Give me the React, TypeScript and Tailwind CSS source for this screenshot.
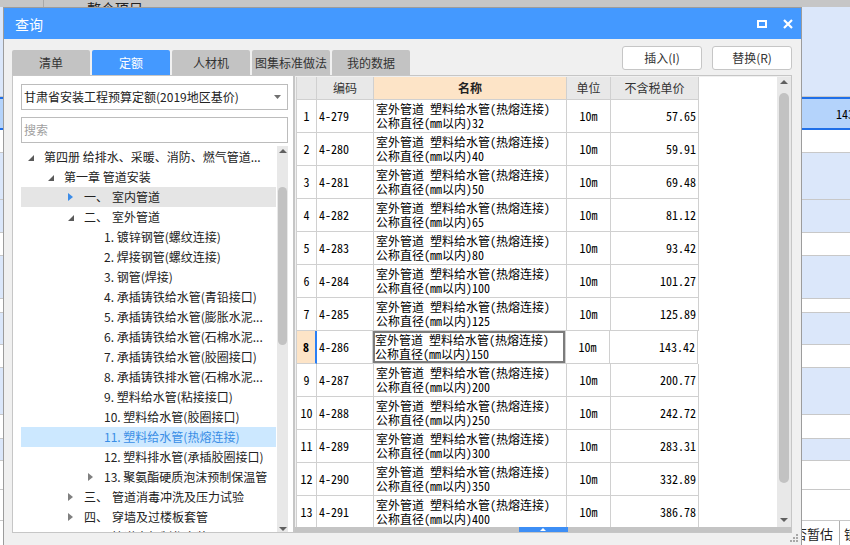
import React from "react";

const UI = "font-['Noto_Sans_CJK_SC','Noto_Sans',sans-serif]";
const MONO = "font-['Noto_Sans_Mono_CJK_SC','Noto_Sans_CJK_SC',monospace]";

const bgRows: { cls: string; text?: string }[] = [
  { cls: "h-[90px] bg-[#dbe7fa] border-b border-[#c8c8c8]" },
  { cls: "h-[33px] bg-[#b4d3fb] border-y-2 border-[#1f6fe8] flex items-center pl-[836px] whitespace-nowrap", text: "143.42" },
  { cls: "h-[23px] bg-white border-b border-[#c8c8c8]" },
  { cls: "h-[47px] bg-[#dbe7fa] border-b border-[#c8c8c8]" },
  { cls: "h-[33px] bg-[#dbe7fa] border-b border-[#c8c8c8]" },
  { cls: "h-[23px] bg-white border-b border-[#c8c8c8]" },
  { cls: "h-[43px] bg-[#dbe7fa] border-b border-[#c8c8c8]" },
  { cls: "h-[14px] bg-white border-b border-[#c8c8c8]" },
  { cls: "h-[32px] bg-[#dbe7fa] border-b border-[#c8c8c8]" },
  { cls: "h-[23px] bg-white border-b border-[#c8c8c8]" },
  { cls: "h-[47px] bg-[#dbe7fa] border-b border-[#c8c8c8]" },
  { cls: "h-[24px] bg-white border-b border-[#c8c8c8]" },
  { cls: "h-[22px] bg-[#dbe7fa] border-b border-[#c8c8c8]" },
  { cls: "h-[29px] bg-white border-b border-[#c8c8c8]" },
  { cls: "h-[31px] bg-white border-b border-[#c8c8c8]" },
];

type TNode = {
  l: 0 | 1 | 2 | 3;
  icon: "open" | "closed" | "none";
  t: string;
  pre?: string;
  sel?: "gray" | "blue";
};

const tree: TNode[] = [
  { l: 0, icon: "open", t: "第四册 给排水、采暖、消防、燃气管道..." },
  { l: 1, icon: "open", t: "第一章 管道安装" },
  { l: 2, icon: "closed", pre: "一、", t: "室内管道", sel: "gray" },
  { l: 2, icon: "open", pre: "二、", t: "室外管道" },
  { l: 3, icon: "none", t: "1. 镀锌钢管(螺纹连接)" },
  { l: 3, icon: "none", t: "2. 焊接钢管(螺纹连接)" },
  { l: 3, icon: "none", t: "3. 钢管(焊接)" },
  { l: 3, icon: "none", t: "4. 承插铸铁给水管(青铅接口)" },
  { l: 3, icon: "none", t: "5. 承插铸铁给水管(膨胀水泥..." },
  { l: 3, icon: "none", t: "6. 承插铸铁给水管(石棉水泥..." },
  { l: 3, icon: "none", t: "7. 承插铸铁给水管(胶圈接口)" },
  { l: 3, icon: "none", t: "8. 承插铸铁排水管(石棉水泥..." },
  { l: 3, icon: "none", t: "9. 塑料给水管(粘接接口)" },
  { l: 3, icon: "none", t: "10. 塑料给水管(胶圈接口)" },
  { l: 3, icon: "none", t: "11. 塑料给水管(热熔连接)", sel: "blue" },
  { l: 3, icon: "none", t: "12. 塑料排水管(承插胶圈接口)" },
  { l: 3, icon: "closed", t: "13. 聚氨酯硬质泡沫预制保温管" },
  { l: 2, icon: "closed", pre: "三、", t: "管道消毒冲洗及压力试验" },
  { l: 2, icon: "closed", pre: "四、", t: "穿墙及过楼板套管" },
  { l: 2, icon: "closed", pre: "五、", t: "管道支架制作安装" },
];

const levelPad = ["pl-[7px]", "pl-[27px]", "pl-[47px]", "pl-[67px]"];

const data = [
  ["4-279", "32", "57.65"],
  ["4-280", "40", "59.91"],
  ["4-281", "50", "69.48"],
  ["4-282", "65", "81.12"],
  ["4-283", "80", "93.42"],
  ["4-284", "100", "101.27"],
  ["4-285", "125", "125.89"],
  ["4-286", "150", "143.42"],
  ["4-287", "200", "200.77"],
  ["4-288", "250", "242.72"],
  ["4-289", "300", "283.31"],
  ["4-290", "350", "332.89"],
  ["4-291", "400", "386.78"],
];

const tabs = ["清单", "定额", "人材机", "图集标准做法", "我的数据"];

function UpArrow({ color = "#606060" }: { color?: string }) {
  return (
    <svg width="8" height="4" viewBox="0 0 8 4">
      <polygon points="0,4 4,0 8,4" fill={color} />
    </svg>
  );
}
function DownArrow({ color = "#606060" }: { color?: string }) {
  return (
    <svg width="8" height="4" viewBox="0 0 8 4">
      <polygon points="0,0 8,0 4,4" fill={color} />
    </svg>
  );
}

function TreeIcon({ kind, blue }: { kind: TNode["icon"]; blue?: boolean }) {
  if (kind === "open")
    return (
      <svg width="6" height="6" viewBox="0 0 6 6" className="mt-[1px]">
        <polygon points="6,0 6,6 0,6" fill="#5a5a5a" />
      </svg>
    );
  if (kind === "closed")
    return (
      <svg width="5" height="8" viewBox="0 0 5 8">
        <polygon points="0,0 5,4 0,8" fill={blue ? "#3c8ce8" : "#808080"} />
      </svg>
    );
  return null;
}

export default function App() {
  return (
    <div className={`relative w-[850px] h-[545px] overflow-hidden bg-white ${UI}`}>
      {/* background application */}
      <div className="flex flex-col h-full">
        <div className="h-[7px] bg-[#c6c6c6] flex text-[14px] leading-[14px] text-[#222] overflow-visible">
          <div className="w-[44px] border-r border-[#a8a8a8]" />
          <div className="pl-[43px] pt-[1px] whitespace-nowrap">整个项目</div>
        </div>
        {bgRows.map((r, i) => (
          <div key={i} className={`${r.cls} ${MONO} text-[12px] text-black`}>
            {r.text}
          </div>
        ))}
        <div className="h-[24px] bg-white flex items-center text-[13px] leading-[13px] text-[#222] whitespace-nowrap">
          <div className="shrink-0 pl-[794px] pr-[6px] h-full flex items-center border-r border-[#b0b0b0]">否暂估</div>
          <div className="shrink-0 pl-[4px]">锁定</div>
        </div>
      </div>

      {/* dialog */}
      <div className="absolute left-[3px] top-[7px] w-[799px] h-[539px] border border-[#9c9c9c] bg-[#f0f0f0] flex flex-col">
        {/* title */}
        <div className="h-[31px] bg-[#4499ff] flex items-center justify-between pl-[11px] pr-[8px] text-white text-[14px] leading-[14px]">
          <span>查询</span>
          <div className="flex items-center gap-[16px]">
            <div className="w-[10px] h-[8px] border-2 border-white" />
            <svg width="10" height="10" viewBox="0 0 10 10">
              <path d="M1 1 L9 9 M9 1 L1 9" stroke="white" strokeWidth="2.2" />
            </svg>
          </div>
        </div>

        <div className="flex-1 flex flex-col pl-[8px] pr-[9px]">
          {/* tabs + buttons */}
          <div className="h-[36px] flex">
            <div className="flex items-end gap-[2px]">
              {tabs.map((t, i) => (
                <div
                  key={t}
                  className={
                    i === 1
                      ? "w-[78px] h-[25px] rounded-t-[2px] bg-[#4499ff] text-white flex items-center justify-center text-[12px] leading-[12px]"
                      : "w-[78px] h-[25px] rounded-t-[2px] bg-[#c3c3c3] text-[#333] flex items-center justify-center text-[12px] leading-[12px]"
                  }
                >
                  {t}
                </div>
              ))}
            </div>
            <div className="ml-auto flex gap-[10px] pt-[7px]">
              <div className="w-[80px] h-[24px] rounded-[3px] border border-[#c6c6c6] bg-white text-[12px] text-[#333] flex items-center justify-center">
                插入(I)
              </div>
              <div className="w-[80px] h-[24px] rounded-[3px] border border-[#c6c6c6] bg-white text-[12px] text-[#333] flex items-center justify-center">
                替换(R)
              </div>
            </div>
          </div>

          {/* main */}
          <div className="h-[458px] flex">
            {/* left panel */}
            <div className="w-[282px] h-full border border-[#c6c6c6] bg-white flex flex-col pl-[8px] pr-[5px] pt-[8px]">
              <div className="h-[26px] border border-[#bcbcbc] bg-white flex items-center pl-[2px] pr-[6px] text-[12px] text-[#222]">
                <span className="whitespace-nowrap">甘肃省安装工程预算定额(2019地区基价)</span>
                <svg width="7" height="4" viewBox="0 0 7 4" className="ml-auto">
                  <polygon points="0,0 7,0 3.5,4" fill="#707070" />
                </svg>
              </div>
              <div className="mt-[7px] h-[26px] border border-[#bcbcbc] bg-white flex items-center pl-[2px] text-[12px] text-[#a0a0a0]">
                搜索
              </div>
              <div className="mt-[3px] flex-1 flex overflow-hidden">
                <div className="w-[255px] pt-[1px] overflow-hidden">
                  {tree.map((n, i) => (
                    <div
                      key={i}
                      className={`h-[20px] flex items-center whitespace-nowrap text-[12px] leading-[20px] ${levelPad[n.l]} ${
                        n.sel === "gray"
                          ? "bg-[#e5e5e5] text-[#222]"
                          : n.sel === "blue"
                          ? "bg-[#cce8ff] text-[#3a8ee6]"
                          : "text-[#222]"
                      }`}
                    >
                      <div className="w-[16px] flex items-center">
                        <TreeIcon kind={n.icon} blue={n.sel === "gray"} />
                      </div>
                      {n.pre ? (
                        <>
                          <span>{n.pre}</span>
                          <span className="ml-[4px]">{n.t}</span>
                        </>
                      ) : (
                        <span>{n.t}</span>
                      )}
                    </div>
                  ))}
                </div>
                <div className="ml-[1px] w-[11px] bg-[#e8e8e8] flex flex-col items-center">
                  <div className="mt-[3px] flex">
                    <UpArrow />
                  </div>
                  <div className="mt-[34px] h-[158px] w-[9px] rounded-full bg-[#c2c2c2]" />
                  <div className="flex-1" />
                  <div className="mb-[1px] flex">
                    <DownArrow />
                  </div>
                </div>
              </div>
            </div>

            {/* table panel */}
            <div className="w-[498px] h-full border border-[#c6c6c6] bg-[#f0f0f0] flex flex-col">
              <div className="flex-1 flex pl-[1px] pt-[1px] overflow-hidden">
                <div className="w-[481px] bg-white overflow-hidden text-black">
                  {/* header */}
                  <div className="flex h-[23px] text-[12px] text-[#333]">
                    <div className="w-[21px] border-l border-r border-b border-[#d0d0d0] bg-[#e8e8e8]" />
                    <div className="w-[57px] border-r border-b border-[#d0d0d0] bg-[#e8e8e8] flex items-center justify-center">
                      编码
                    </div>
                    <div className="w-[193px] border-r border-b border-[#d0d0d0] bg-[#fde4c7] flex items-center justify-center font-bold text-[#222]">
                      名称
                    </div>
                    <div className="w-[44px] border-r border-b border-[#d0d0d0] bg-[#e8e8e8] flex items-center justify-center">
                      单位
                    </div>
                    <div className="w-[88px] border-r border-b border-[#d0d0d0] bg-[#e8e8e8] flex items-center justify-center">
                      不含税单价
                    </div>
                  </div>
                  {data.map((r, i) => {
                    const cur = i === 7;
                    return (
                      <div key={i} className={`flex h-[33px] text-[12px] ${MONO}`}>
                        <div
                          className={
                            cur
                              ? "w-[21px] border-l border-r-2 border-b border-l-[#d0d0d0] border-b-[#d0d0d0] border-r-[#2a7ff5] bg-[#fde4c7] flex items-center justify-center font-bold"
                              : "w-[21px] border-l border-r border-b border-[#d0d0d0] flex items-center justify-center"
                          }
                        >
                          {i + 1}
                        </div>
                        <div className={`${cur ? "w-[56px]" : "w-[57px]"} border-r border-b border-[#d0d0d0] flex items-center pl-[2px]`}>
                          {r[0]}
                        </div>
                        <div
                          className={`w-[193px] border-r border-b border-[#d0d0d0] flex flex-col justify-center pl-[2px] leading-[14px] whitespace-nowrap ${
                            cur ? "shadow-[inset_0_0_0_2px_#7c7c7c]" : ""
                          }`}
                        >
                          <div>室外管道 塑料给水管(热熔连接)</div>
                          <div>公称直径(mm以内){r[1]}</div>
                        </div>
                        <div className="w-[44px] border-r border-b border-[#d0d0d0] flex items-center justify-center">
                          10m
                        </div>
                        <div className="w-[88px] border-r border-b border-[#d0d0d0] flex items-center justify-end pr-[2px]">
                          {r[2]}
                        </div>
                      </div>
                    );
                  })}
                </div>
                <div className="w-[14px] bg-[#e8e8e8] flex flex-col items-center">
                  <div className="mt-[3px] flex">
                    <UpArrow />
                  </div>
                  <div className="mt-[9px] h-[390px] w-[10px] rounded-full bg-[#c2c2c2]" />
                  <div className="flex-1" />
                  <div className="mb-[5px] flex">
                    <DownArrow />
                  </div>
                </div>
              </div>
              <div className="h-[5px] bg-[#c4c4c4] flex justify-center">
                <div className="w-[49px] h-[5px] bg-[#3d8ef5] flex justify-center pt-[1px]">
                  <svg width="6" height="3" viewBox="0 0 6 3">
                    <polygon points="0,3 3,0 6,3" fill="white" />
                  </svg>
                </div>
              </div>
            </div>
          </div>

          {/* bottom strip with grip */}
          <div className="h-[12px] flex justify-end items-start pt-[1px] -mr-[6px]">
            <svg width="8" height="8" viewBox="0 0 8 8">
              <rect x="6" y="0" width="2" height="2" fill="#a8a8a8" />
              <rect x="3" y="3" width="2" height="2" fill="#a8a8a8" />
              <rect x="6" y="3" width="2" height="2" fill="#a8a8a8" />
              <rect x="0" y="6" width="2" height="2" fill="#a8a8a8" />
              <rect x="3" y="6" width="2" height="2" fill="#a8a8a8" />
              <rect x="6" y="6" width="2" height="2" fill="#a8a8a8" />
            </svg>
          </div>
        </div>
      </div>
    </div>
  );
}
